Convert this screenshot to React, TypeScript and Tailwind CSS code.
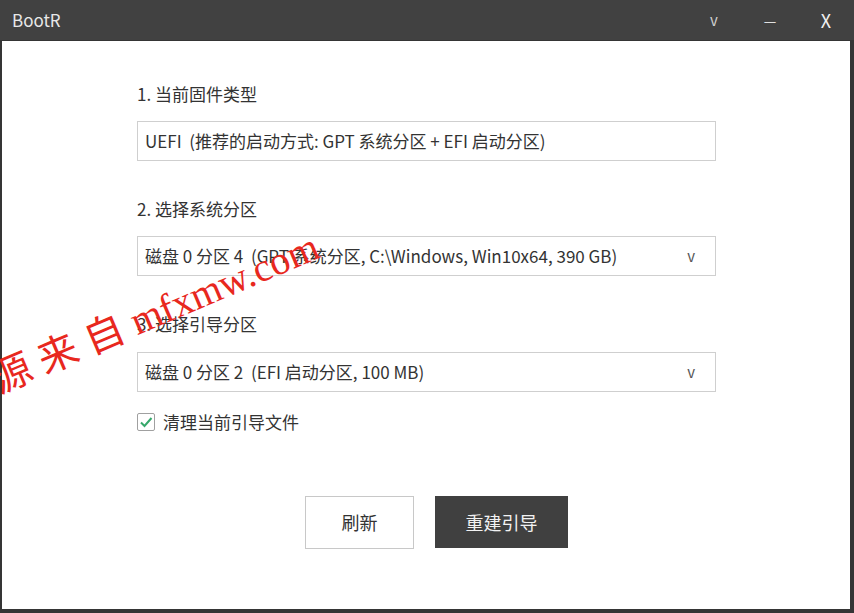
import { useState } from 'react';

const font = { fontFamily: '"Noto Sans CJK SC", "Noto Sans", sans-serif' };

function Field({ children, chevron }: { children: React.ReactNode; chevron?: boolean }) {
	return (
		<div className="w-[579px] h-[40px] border border-[#cfcfcf] bg-white flex items-center justify-between pl-[7px] pr-[20px] text-[17px] text-[#333]">
			<span className="whitespace-pre">{children}</span>
			{chevron && <span className="text-[15px] text-[#555]">v</span>}
		</div>
	);
}

export default function App() {
	const [clean, setClean] = useState(true);

	return (
		<div
			className="relative w-[854px] h-[613px] bg-[#353535] flex flex-col pl-[2px] pr-[4px] pb-[4px] overflow-hidden"
			style={font}
		>
			{/* title bar */}
			<div className="h-[40px] bg-[#414141] flex items-center pl-[12px] text-[#e8e8e8] -ml-[2px] -mr-[4px]">
				<span className="text-[17px] flex-1">BootR</span>
				<span className="w-[56px] text-center text-[15px] text-[#cfcfcf]">v</span>
				<span className="w-[56px] text-center text-[14px] text-[#e0e0e0]">—</span>
				<span className="w-[56px] text-center text-[18px] text-[#f0f0f0]">X</span>
			</div>

			{/* body */}
			<div className="flex-1 bg-white mt-[1px] pl-[135px] pt-[42px] flex flex-col">
				<div className="text-[17px] text-[#333] leading-[22px]">1. 当前固件类型</div>
				<div className="mt-[16px]">
					<Field>{'UEFI  (推荐的启动方式: GPT 系统分区 + EFI 启动分区)'}</Field>
				</div>

				<div className="mt-[37px] text-[17px] text-[#333] leading-[22px]">2. 选择系统分区</div>
				<div className="mt-[16px]">
					<Field chevron>{'磁盘 0 分区 4  (GPT 系统分区, C:\\Windows, Win10x64, 390 GB)'}</Field>
				</div>

				<div className="mt-[37px] text-[17px] text-[#333] leading-[22px]">3. 选择引导分区</div>
				<div className="mt-[17px]">
					<Field chevron>{'磁盘 0 分区 2  (EFI 启动分区, 100 MB)'}</Field>
				</div>

				<label className="mt-[19px] flex items-center gap-[8px] text-[17px] text-[#333] cursor-pointer leading-[22px]">
					<span
						className="w-[18px] h-[18px] border border-[#a0a0a0] rounded-[2px] flex items-center justify-center bg-white"
						onClick={() => setClean(!clean)}
					>
						{clean && (
							<svg width="14" height="14" viewBox="0 0 14 14">
								<path d="M2 7.5 L5.5 11 L12.5 3" fill="none" stroke="#36a86b" strokeWidth="2" />
							</svg>
						)}
					</span>
					清理当前引导文件
				</label>

				<div className="mt-[63px] flex gap-[21px] pl-[168px]">
					<button className="w-[109px] h-[53px] border border-[#c8c8c8] bg-white text-[18px] text-[#333]">
						刷新
					</button>
					<button className="w-[133px] h-[52px] bg-[#404040] text-[18px] text-[#f2f2f2]">
						重建引导
					</button>
				</div>
			</div>

			{/* watermark */}
			<div
				className="absolute left-[-6px] top-[362px] text-[40px] leading-[40px] text-[#e8281e] whitespace-nowrap origin-left -rotate-[23deg] pointer-events-none"
				style={{ fontFamily: '"Liberation Serif", "Noto Sans CJK SC", serif' }}
			>
				<span className="tracking-[10px]">源来自</span>mfxmw.com
			</div>
		</div>
	);
}
